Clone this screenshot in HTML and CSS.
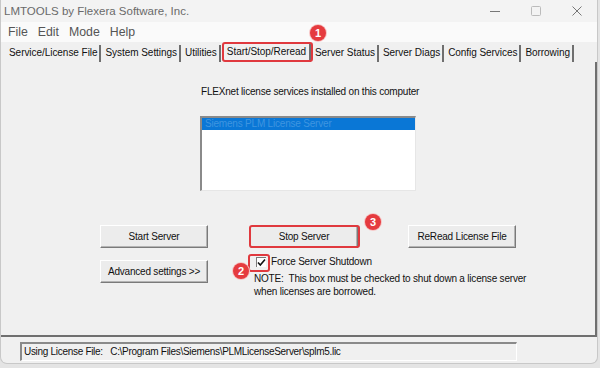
FILE: index.html
```html
<!DOCTYPE html>
<html>
  <head>
    <link rel="stylesheet" href="styles.css">
  </head>
  <body>
    <div class="window">
      <div class="titlebar">
        <span class="title">LMTOOLS by Flexera Software, Inc.</span>
        <div class="caption">
          <span class="cap-btn">
            <svg width="12" height="12" viewBox="0 0 12 12"><path d="M1 6.5h10" stroke="#777" stroke-width="1"/></svg>
          </span>
          <span class="cap-btn">
            <svg width="12" height="12" viewBox="0 0 12 12"><rect x="1.5" y="1.5" width="9" height="9" rx="1" fill="none" stroke="#bbb" stroke-width="1"/></svg>
          </span>
          <span class="cap-btn">
            <svg width="12" height="12" viewBox="0 0 12 12"><path d="M1.5 1.5l9 9M10.5 1.5l-9 9" stroke="#777" stroke-width="1"/></svg>
          </span>
        </div>
      </div>

      <div class="menubar">
        <span class="menu-item">File</span>
        <span class="menu-item">Edit</span>
        <span class="menu-item">Mode</span>
        <span class="menu-item">Help</span>
      </div>

      <div class="tabs">
        <span class="tab">Service/License File</span>
        <span class="tab">System Settings</span>
        <span class="tab">Utilities</span>
        <span class="tab tab-active">Start/Stop/Reread
          <span class="mark mark-tab"></span>
          <span class="badge badge-1">1</span>
        </span>
        <span class="tab">Server Status</span>
        <span class="tab">Server Diags</span>
        <span class="tab">Config Services</span>
        <span class="tab">Borrowing</span>
      </div>

      <div class="panel">
        <div class="services">
          <p class="services-label">FLEXnet license services installed on this computer</p>
          <div class="listbox">
            <div class="list-row selected">Siemens PLM License Server</div>
          </div>
        </div>

        <div class="controls">
          <div class="col">
            <button class="btn">Start Server</button>
            <button class="btn">Advanced settings &gt;&gt;</button>
          </div>

          <div class="col col-mid">
            <div class="stop-wrap">
              <button class="btn">Stop Server</button>
              <span class="mark mark-stop"></span>
              <span class="badge badge-3">3</span>
            </div>
            <label class="check-row">
              <span class="checkbox">
                <svg width="9" height="9" viewBox="0 0 9 9"><path d="M1 4.5l2.3 2.5L8 1.5" fill="none" stroke="#111" stroke-width="1.6"/></svg>
                <span class="mark mark-check"></span>
                <span class="badge badge-2">2</span>
              </span>
              Force Server Shutdown
            </label>
            <p class="note">NOTE:&nbsp; This box must be checked to shut down a license server<br>when licenses are borrowed.</p>
          </div>

          <div class="col">
            <button class="btn">ReRead License File</button>
          </div>
        </div>
      </div>

      <div class="statusbar">
        <div class="status-field">Using License File:&nbsp;&nbsp; C:\Program Files\Siemens\PLMLicenseServer\splm5.lic</div>
      </div>
    </div>
  </body>
</html>
```

FILE: styles.css
```css
body {
  margin: 0;
  background-color: #e4e4e4;
  font-family: 'Liberation Sans', Arial, sans-serif;
  color: #111;
}

.window {
  width: 598px;
  height: 364px;
  box-sizing: border-box;
  background-color: #f0f0f0;
  border: 1px solid #c8c8c8;
  border-top: none;
  border-radius: 0 0 7px 7px;
  overflow: hidden;
}

.titlebar {
  height: 22px;
  display: flex;
  align-items: center;
  justify-content: space-between;
  background-color: #f3f3f3;
}

.title {
  font-size: 11.5px;
  color: #6a6a6a;
  padding-left: 3px;
}

.caption {
  display: flex;
}

.cap-btn {
  width: 41px;
  display: flex;
  justify-content: center;
}

.menubar {
  height: 20px;
  display: flex;
  align-items: center;
  gap: 10px;
  padding-left: 7px;
  background-color: #fafafa;
  font-size: 12.3px;
  color: #555;
}

.tabs {
  height: 20px;
  display: flex;
  align-items: flex-end;
  padding-left: 8px;
  gap: 4px;
  font-size: 10px;
  letter-spacing: -0.05px;
}

.tab {
  position: relative;
  height: 17px;
  line-height: 16px;
  padding: 0 2px 0 0;
  border-right: 2px solid #6f6f6f;
  white-space: nowrap;
}

.tab-active {
  height: 19px;
  line-height: 18px;
  padding: 0 3px 0 2px;
}

.panel {
  height: 275px;
  border-right: 2px solid #6f6f6f;
  border-bottom: 2px solid #6f6f6f;
  box-sizing: border-box;
  font-size: 10px;
  letter-spacing: -0.2px;
}

.services {
  width: 216px;
  margin-left: 199px;
  padding-top: 23px;
}

.services-label {
  margin: 0 0 17px 1px;
  line-height: 14px;
  white-space: nowrap;
}

.listbox {
  height: 75px;
  background-color: #fff;
  border-top: 2px solid #8a8a8a;
  border-left: 2px solid #8a8a8a;
  border-right: 1px solid #e6e6e6;
  border-bottom: 1px solid #e6e6e6;
  box-sizing: border-box;
}

.list-row {
  height: 12px;
  line-height: 12px;
  padding-left: 3px;
  white-space: nowrap;
}

.selected {
  background-color: #0a77d6;
  color: #3f95e0;
}

.controls {
  display: flex;
  padding-left: 99px;
  padding-top: 34px;
  gap: 42px;
}

.col {
  display: flex;
  flex-direction: column;
  gap: 12px;
}

.col-mid {
  gap: 0;
  width: 116px;
}

.btn {
  width: 108px;
  height: 23px;
  padding: 0;
  font-family: inherit;
  font-size: 10px;
  letter-spacing: -0.2px;
  color: #111;
  background-color: #ececec;
  border: 1px solid;
  border-color: #ffffff #7a7a7a #7a7a7a #ffffff;
  box-shadow: inset -1px -1px 0 #b4b4b4;
}

.stop-wrap {
  position: relative;
  width: 108px;
}

.check-row {
  display: flex;
  align-items: center;
  gap: 5px;
  margin-top: 8px;
  margin-left: 6px;
  white-space: nowrap;
  line-height: 12px;
}

.checkbox {
  position: relative;
  width: 10px;
  height: 10px;
  display: flex;
  align-items: center;
  justify-content: center;
  background-color: #fff;
  border-top: 1px solid #7a7a7a;
  border-left: 1px solid #7a7a7a;
  box-sizing: border-box;
}

.note {
  margin: 4px 0 0 4px;
  line-height: 13px;
  white-space: nowrap;
}

.statusbar {
  padding: 5px 0 0 19px;
}

.status-field {
  width: 497px;
  height: 19px;
  box-sizing: border-box;
  border-top: 2px solid #8a8a8a;
  border-left: 2px solid #8a8a8a;
  border-right: 1px solid #fff;
  border-bottom: 1px solid #fff;
  font-size: 10px;
  letter-spacing: -0.3px;
  line-height: 16px;
  padding-left: 2px;
  white-space: nowrap;
}

.mark {
  position: absolute;
  border: 2px solid #e0393e;
  border-radius: 3px;
}

.mark-tab {
  left: -3px;
  top: -1px;
  right: -4px;
  bottom: 0;
}

.mark-stop {
  left: -1px;
  top: 0;
  width: 107px;
  height: 19px;
}

.mark-check {
  left: -9px;
  top: -4px;
  width: 18px;
  height: 14px;
}

.badge {
  position: absolute;
  width: 16px;
  height: 16px;
  border-radius: 50%;
  background-color: #e53b3f;
  color: #fff;
  font-size: 11px;
  font-weight: bold;
  letter-spacing: 0;
  line-height: 16px;
  text-align: center;
  box-shadow: 0 0 0 1px #f7c6c6;
}

.badge-1 {
  right: -17px;
  top: -18px;
}

.badge-3 {
  left: 115px;
  top: -11px;
}

.badge-2 {
  left: -24px;
  top: 5px;
}
```
